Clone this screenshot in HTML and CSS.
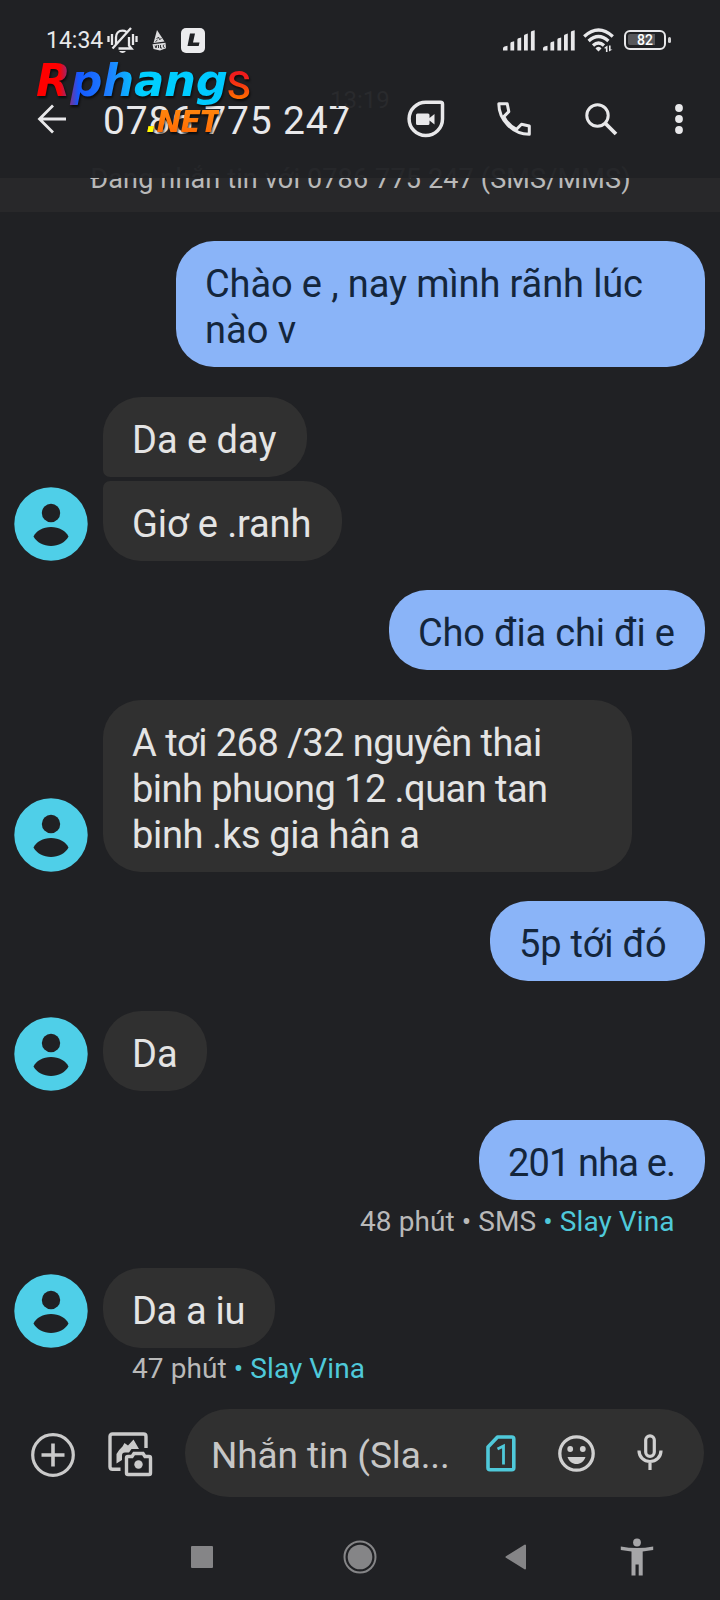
FILE: index.html
```html
<!DOCTYPE html>
<html lang="vi">
<head>
<meta charset="utf-8">
<title>0786 775 247</title>
<link rel="stylesheet" href="styles.css">
</head>
<body>
<svg class="defs" width="0" height="0">
  <symbol id="person" viewBox="0 0 74 74">
    <circle cx="37" cy="37" r="36.7" fill="#4fcfe8"/>
    <circle cx="37" cy="26" r="9.2" fill="#202124"/>
    <path d="M19.500 49.500C22 44 29 40 37 40s15 4 17.500 9.500C51 55.500 44.500 59 37 59s-14-3.500-17.500-9.500z" fill="#202124"/>
  </symbol>
  <symbol id="signal" viewBox="0 0 32 21">
    <path d="M0 20.500v-2q0-1.500 1.500-1.900l3-.8v4.700zM7.400 20.500v-7.300q0-1 1-1.200l2.800-.8v9.300zM14.400 20.500V9.500q0-1 1-1.300l2.800-.8v13.100zM21 20.500V5.800q0-1 1-1.300l2.800-1v17zM27.900 20.500V2.200q0-1 1-1.300L31.700.2v20.300z" fill="#e8e8ea"/>
  </symbol>
</svg>
<header class="top">
  <div class="status">
    <span class="clock">14:34</span>
    <svg class="bell" width="31" height="27" viewBox="0 0 31 27" fill="none" stroke="#e8e8ea" stroke-width="2.300">
      <path d="M1.500 9v6M5 7v11M26 7v11M29.500 9v6"/>
      <path d="M9 17.500v-7c0-4 2.500-6.800 6.500-6.800 1.500 0 2.800.4 3.900 1.200M22 10v8.500l2.500 3H11.500M24 1L5.500 21.500"/>
      <path d="M12 24h7q-1.500 2-3.500 2T12 24z" fill="#e8e8ea" stroke="none"/>
    </svg>
    <svg class="vodka" width="15" height="21" viewBox="0 0 15 21">
      <path d="M5 0l7.500 11.500L1.500 13zM.5 14.300l13-1.500.5 5.500L8 20.500 1.500 19z" fill="#dcdcde"/>
      <path d="M4.500 9l2-2 1 2.500 2-1M3.500 11.500l2-1.500M3 15.500l1 2.500 1-3M6.500 15v3M8.500 15v3h1.500M12 14.500l-1 1.500 1.500 2" stroke="#202124" stroke-width=".9" fill="none"/>
    </svg>
    <svg class="lbox" width="24" height="25" viewBox="0 0 24 25">
      <rect width="24" height="25" rx="5" fill="#ebebed"/>
      <path d="M9 5.500h5l-2 9h6.500l-.8 3.500H6.500z" fill="#202124"/>
    </svg>
    <span class="grow"></span>
    <svg class="sig" width="32" height="21"><use href="#signal"/></svg>
    <svg class="sig" width="32" height="21"><use href="#signal"/></svg>
    <svg class="wifi" width="31" height="25" viewBox="0 0 31 25">
      <g fill="none" stroke="#e8e8ea" stroke-width="3.300">
        <path d="M1.200 8.500Q15.500-4.500 29.800 8.500M5.600 13Q15.500 4 25.400 13M10 17.500q5.500-5 11 0"/>
      </g>
      <path d="M12.500 20.500a3.500 3.500 0 0 1 6 0l-3 3zM21.500 19.500l3-2V24h-1.600v-3.500h-1.400zM26 17.500h1.600v4h1.900l-3.500 2z" fill="#e8e8ea"/>
    </svg>
    <span class="battery"><span class="cell">82</span></span>
  </div>
  <div class="bar">
    <svg width="30" height="30" viewBox="0 0 30 30" fill="none" stroke="#e8e8ea" stroke-width="2.800"><path d="M29 15H2.500M16 1.500L2.500 15 16 28.500"/></svg>
    <h1 class="title">0786 775 247</h1>
    <svg class="duo" width="38" height="38" viewBox="0 0 38 38">
      <path d="M19 2.200h14.500q2 0 2 2V19A16.700 16.700 0 1 1 19 2.200z" fill="none" stroke="#e8e8ea" stroke-width="3.500"/>
      <path d="M10.500 13.500h10.500q1.500 0 1.500 1.500v3l5-4v10.500l-5-4v3q0 1.500-1.500 1.500H10.500q-1.500 0-1.500-1.500V15q0-1.500 1.500-1.500z" fill="#e8e8ea"/>
    </svg>
    <svg class="call" width="34" height="34" viewBox="0 0 34 34" fill="none" stroke="#e8e8ea" stroke-width="3">
      <path d="M1.800 1.800h8.400l1.600 7.800-5 5C9.500 20 14 24.500 19.500 27.300l5-5 7.800 1.700v8.300C16 32.300 1.800 18 1.800 1.800z" stroke-linejoin="round"/>
    </svg>
    <svg class="find" width="33" height="33" viewBox="0 0 33 33" fill="none" stroke="#e8e8ea" stroke-width="3"><circle cx="12.500" cy="12.500" r="10.700"/><path d="M20.500 20.500L31 31" stroke-width="3.800"/></svg>
    <svg class="more" width="8" height="30" viewBox="0 0 8 30" fill="#e8e8ea"><circle cx="4" cy="4" r="3.900"/><circle cx="4" cy="15" r="3.900"/><circle cx="4" cy="26" r="3.900"/></svg>
  </div>
  <div class="faint">13:19</div>
  <div class="logo"><span class="l1">Rphang</span><span class="l2">S</span><span class="l3"><i>.</i>NET</span></div>
</header>
<div class="banner"><p>Đang nhắn tin với 0786 775 247 (SMS/MMS)</p></div>
<main class="chat">
  <div class="row out"><p class="b w1"><span class="t1">Chào e , nay mình rãnh lúc</span><br><span class="t2">nào v</span></p></div>
  <div class="row in stack"><p class="b first w2"><span class="t3">Da e day</span></p></div>
  <div class="row in next"><svg class="av"><use href="#person"/></svg><p class="b last w3"><span class="t4">Giơ e .ranh</span></p></div>
  <div class="row out"><p class="b w4"><span class="t5">Cho đia chi đi e</span></p></div>
  <div class="row in"><svg class="av"><use href="#person"/></svg><p class="b w5"><span class="t6">A tơi 268 /32 nguyên thai</span><br><span class="t6">binh phuong 12 .quan tan</span><br><span class="t8">binh .ks gia hân a</span></p></div>
  <div class="row out"><p class="b w6"><span class="t5">5p tới đó</span></p></div>
  <div class="row in"><svg class="av"><use href="#person"/></svg><p class="b w7"><span>Da</span></p></div>
  <div class="row out"><p class="b w8"><span class="t11">201 nha e.</span></p></div>
  <div class="meta right">48 phút • SMS <em>• Slay Vina</em></div>
  <div class="row in after"><svg class="av"><use href="#person"/></svg><p class="b w9"><span class="t8">Da a iu</span></p></div>
  <div class="meta">47 phút <em>• Slay Vina</em></div>
</main>
<footer class="compose">
  <svg class="plus" width="44" height="44" viewBox="0 0 44 44" fill="none" stroke="#cacaca" stroke-width="3.200"><circle cx="22" cy="22" r="20.300"/><path d="M22 10.500v23M10.500 22h23" stroke-width="3.600"/></svg>
  <svg class="gallery" width="45" height="45" viewBox="0 0 45 45" fill="none" stroke="#cacaca" stroke-width="3.400">
    <path d="M12.500 37.300H4.500q-2.500 0-2.500-2.500V4.500Q2 2 4.500 2h31q2.500 0 2.500 2.500V16"/>
    <path d="M8.500 31.500V22q3-5 6-7.500l2-3.500 3.500 2.500 5.500-6L31 17h-7.500l-2.500 3.500h-4q-3 0-3 3V28z" fill="#cacaca" stroke="none"/>
    <path d="M20 24.500h4l2-3h9l2 3h4q1.500 0 1.500 1.500v15q0 1.500-1.500 1.500H20q-1.500 0-1.500-1.500V26q0-1.500 1.500-1.500z"/>
    <circle cx="30.500" cy="32.500" r="4.200" fill="#cacaca" stroke="none"/>
  </svg>
  <div class="pill">
    <span class="ph">Nhắn tin (Sla...</span>
    <svg class="sim" width="30" height="37" viewBox="0 0 30 37"><path d="M11.500 2h14.300q2 0 2 2v28.800q0 2-2 2H4q-2 0-2-2V12z" fill="none" stroke="#4fc9da" stroke-width="3.600" stroke-linejoin="round"/><path d="M11.500 14l6-3v18.500" fill="none" stroke="#4fc9da" stroke-width="2.800"/></svg>
    <svg class="smile" width="37" height="37" viewBox="0 0 37 37"><circle cx="18.500" cy="18.500" r="16.700" fill="none" stroke="#d0d0d0" stroke-width="3.300"/><circle cx="12.200" cy="14" r="2.900" fill="#d0d0d0"/><circle cx="24.800" cy="14" r="2.900" fill="#d0d0d0"/><path d="M9.500 22h18c-1.500 4.500-5 7-9 7s-7.500-2.500-9-7z" fill="#d0d0d0"/></svg>
    <svg class="mic" width="26" height="36" viewBox="0 0 26 36" fill="none" stroke="#d0d0d0" stroke-width="3.200"><rect x="8.700" y="1.800" width="8.600" height="20.500" rx="4.300"/><path d="M2 16.500c0 6.500 4.800 11 11 11s11-4.500 11-11M13 27.500V36"/></svg>
  </div>
</footer>
<nav class="nav">
  <span class="sq"></span>
  <svg class="home" width="34" height="34" viewBox="0 0 34 34"><circle cx="17" cy="17" r="15.500" fill="none" stroke="#858587" stroke-width="2"/><circle cx="17" cy="17" r="12.300" fill="#858587"/></svg>
  <svg class="back" width="22" height="26" viewBox="0 0 22 26"><path d="M20 1.500v23L1.500 13z" fill="#858587" stroke="#858587" stroke-width="2" stroke-linejoin="round"/></svg>
  <svg class="access" width="34" height="38" viewBox="0 0 34 38" fill="#a6a6a8"><circle cx="17" cy="4.500" r="3.900"/><path d="M.8 8.500Q17 11.500 33.200 8.500V12l-10.500 1.600V37.500h-4V26.500h-3.200v11h-4V13.600L.8 12z"/></svg>
</nav>
</body>
</html>
```

FILE: styles.css
```css
* { box-sizing: border-box; }
body { margin: 0; width: 720px; height: 1600px; overflow: hidden; background: #202124; color: #e4e4e4; font-family: Roboto, "Noto Sans", sans-serif; display: flex; flex-direction: column; }
svg { display: block; flex: none; }
p, h1 { margin: 0; font-weight: 400; }
em { font-style: normal; color: #4fc9da; }
.defs { position: absolute; }
.grow { flex: 1; }

.top { position: relative; z-index: 1; height: 178px; flex: none; background: rgba(32, 33, 36, .96); }
.status { display: flex; align-items: center; height: 80px; padding: 0 54px 0 46px; }
.clock { font-size: 23px; width: 61px; white-space: nowrap; color: #e8e8ea; }
.vodka { margin-left: 14px; }
.lbox { margin-left: 14px; }
.sig { margin-right: 8px; }
.wifi { margin-right: 10px; }
.battery { position: relative; width: 42px; height: 20px; border: 2.500px solid #e8e8ea; border-radius: 6px; padding: 2px; }
.battery::after { content: ""; position: absolute; right: -7px; top: 5px; width: 3px; height: 6px; border-radius: 2px; background: #d0d0d2; }
.cell { display: block; height: 11px; border-radius: 2px; background: linear-gradient(90deg, #57575a 80%, transparent 80%); font: 500 14px/12px Roboto, sans-serif; text-align: center; color: #fff; }
.bar { display: flex; align-items: center; height: 78px; padding: 0 37px 0 37px; }
.title { position: relative; top: 2px; font-size: 39px; line-height: 46px; letter-spacing: .8px; margin-left: 36px; width: 304px; white-space: nowrap; color: #e8e8ea; }
.call { margin-left: 52px; }
.find { margin-left: 54px; }
.more { margin-left: auto; }
.faint { position: absolute; left: 330px; top: 85px; font-size: 24px; line-height: 30px; color: #292a2d; }
.logo { position: absolute; left: 36px; top: 56px; line-height: 1; filter: drop-shadow(1px 2px 1px #000a); }
.logo span { position: absolute; white-space: nowrap; color: transparent; -webkit-background-clip: text; background-clip: text; }
.l1 { left: 0; top: 0; font: italic 700 45px/50px "DejaVu Sans", sans-serif; letter-spacing: -.3px; background-image: linear-gradient(90deg, #f00 12%, #1458ff 22%, #1e7fff 38%, #00cfff 55%, #00c8ff); }
.l2 { left: 191px; top: 7px; font: 500 39px/46px Roboto, sans-serif; background-image: linear-gradient(#f01c1c 30%, #ff6a00 75%); }
.l3 { left: 110px; top: 49px; font: italic 700 30px/34px "DejaVu Sans", sans-serif; letter-spacing: -1px; background-image: linear-gradient(#ff8a10, #ff6400); }
.l3 i { color: #ff0; }

.banner { height: 34px; flex: none; background: #28282a; }
.banner p { position: relative; top: -14px; font-size: 27px; line-height: 30px; letter-spacing: .15px; margin-left: 90px; color: #b9b9b9; white-space: nowrap; }

.chat { height: 1182px; flex: none; padding: 29px 15px 0; }
.row { display: flex; align-items: flex-end; margin-bottom: 29.500px; }
.out { justify-content: flex-end; }
.stack { margin-bottom: 4px; padding-left: 88px; }
.after { margin-top: 30px; }
.av { width: 74px; height: 74px; margin: 0 15px 0 -1px; }
.b { padding: 17px 0 17px 29px; border-radius: 38px; font-size: 38px; line-height: 46px; background: #303030; white-space: nowrap; }
.b span { position: relative; top: 3px; }
.out .b { background: #8ab4f8; color: #14263c; }
.first { border-bottom-left-radius: 7px; }
.last { border-top-left-radius: 7px; }
.w1 { width: 529px; } .w2 { width: 204px; } .w3 { width: 239px; } .w4 { width: 316px; } .w5 { width: 529px; }
.w6 { width: 215px; } .w7 { width: 104px; } .w8 { width: 226px; } .w9 { width: 172px; }
.t1, .t4 { letter-spacing: -.12px; }
.t5 { letter-spacing: -.2px; }
.t6 { letter-spacing: -.54px; }
.t8 { letter-spacing: -.33px; }
.t11 { letter-spacing: -.85px; }
.meta { font-size: 28px; line-height: 32px; letter-spacing: .08px; margin: -24px 0 0 117px; color: #b9b9b9; white-space: nowrap; }
.right { margin-left: 345px; }

.compose { height: 118px; flex: none; display: flex; align-items: center; padding: 0 16px 0 31px; }
.plus, .gallery { margin-top: 3px; }
.gallery { margin-left: 33px; }
.pill { margin-left: 32px; flex: 1; height: 88px; border-radius: 44px; background: #303030; display: flex; align-items: center; padding: 0 41px 0 26px; }
.ph { font-size: 37px; color: #c6c6c6; width: 275px; padding-top: 5px; letter-spacing: -.1px; white-space: nowrap; }
.smile { margin-left: 42px; }
.mic { margin-left: auto; margin-top: -2px; }
.nav { flex: 1; display: flex; align-items: center; padding: 2px 66px 0 191px; }
.sq { width: 22px; height: 22px; background: #858587; border-radius: 1px; }
.home { margin-left: 130px; }
.back { margin-left: 128px; }
.access { margin-left: auto; }
```
